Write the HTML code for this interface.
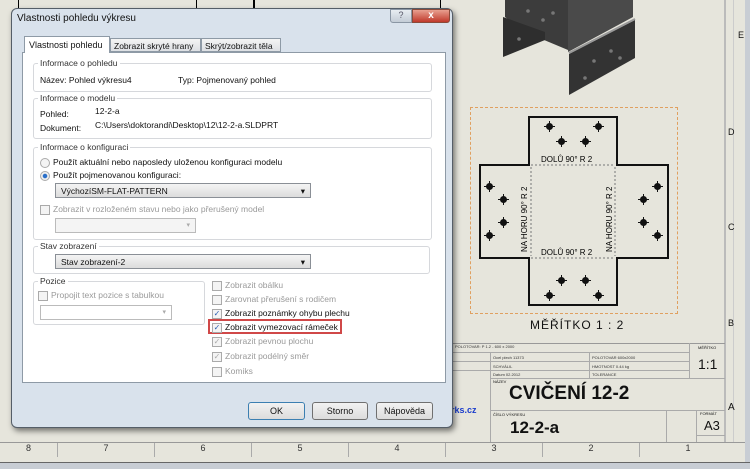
<!DOCTYPE html>
<html><head><meta charset="utf-8"><style>
*{margin:0;padding:0;box-sizing:border-box}
body{width:750px;height:469px;overflow:hidden;background:#e6e5dc;font-family:"Liberation Sans",sans-serif;position:relative;font-size:8.5px;color:#111}
.a{position:absolute}
.dlg{left:11px;top:8px;width:442px;height:420px;background:#d9e2ec;border:1px solid #555e68;border-radius:6px;box-shadow:2px 3px 6px rgba(0,0,0,.5)}
.panel{left:22px;top:52px;width:424px;height:331px;background:#fff;border:1px solid #8e9aa6}
.grp{border:1px solid #d6d8dc;border-radius:3px}
.lab{background:#fff;padding:0 2px;color:#333}
.combo{border:1px solid #8a8f96;background:linear-gradient(#f4f4f4,#dcdcdc);height:15px;padding:2px 5px;font-size:8.5px}
.dis{color:#9a9a9a}
.cb{width:10px;height:10px;border:1px solid #aaa;background:#f4f4f4;display:inline-block;vertical-align:middle;margin-right:3px;font-size:8px;line-height:8px;text-align:center;color:#2a5db0}
.btn{border:1px solid #707070;border-radius:3px;background:linear-gradient(#f2f2f2,#dcdcdc);text-align:center;font-size:9px;line-height:16px;height:18px}
.ru{top:443px;height:14px;font-size:9px;color:#333;border-left:1px solid #aaa;text-align:center}
.hole{position:absolute;width:7px;height:7px;border-radius:50%;background:#111}
.hole:before{content:"";position:absolute;left:-2px;top:3px;width:11px;height:1px;background:#111}
.hole:after{content:"";position:absolute;left:3px;top:-2px;width:1px;height:11px;background:#111}
</style></head><body>
<div class="a" style="left:724px;top:0;width:2px;height:443px;background:#bbb"></div>
<div class="a" style="left:733px;top:0;width:1px;height:443px;background:#ccc"></div>
<div class="a" style="left:745px;top:0;width:5px;height:469px;background:#c8cdd4"></div>
<div class="a" style="left:738px;top:30px;font-size:9px">E</div>
<div class="a" style="left:728px;top:127px;font-size:9px">D</div>
<div class="a" style="left:728px;top:222px;font-size:9px">C</div>
<div class="a" style="left:728px;top:318px;font-size:9px">B</div>
<div class="a" style="left:728px;top:402px;font-size:10px">A</div>
<div class="a" style="left:18px;top:0;width:1px;height:8px;background:#000"></div>
<div class="a" style="left:196px;top:0;width:1px;height:8px;background:#000"></div>
<div class="a" style="left:253px;top:0;width:2px;height:8px;background:#000"></div>
<div class="a" style="left:440px;top:0;width:1px;height:8px;background:#000"></div>

<svg class="a" style="left:0;top:0" width="750" height="100">
<polygon points="505,0 568,0 568,50 525,32 505,17" fill="#3c3c3c"/>
<polygon points="503,17 545,32 545,40 503,57" fill="#2e2e2e"/>
<polygon points="568,0 633,0 633,17 568,52" fill="#4a4a4a"/>
<polygon points="569,54 635,20 635,58 569,95" fill="#333"/>
<line x1="569" y1="53" x2="635" y2="19" stroke="#999" stroke-width="2"/>
<circle cx="528" cy="11" r="1.8" fill="#777"/><circle cx="553" cy="13" r="1.8" fill="#777"/><circle cx="543" cy="20" r="1.8" fill="#777"/><circle cx="519" cy="39" r="1.8" fill="#777"/>
<circle cx="594" cy="61" r="1.8" fill="#777"/><circle cx="611" cy="51" r="1.8" fill="#777"/><circle cx="620" cy="58" r="1.8" fill="#777"/><circle cx="585" cy="78" r="1.8" fill="#777"/>
</svg>

<div class="a" style="left:470px;top:107px;width:208px;height:207px;border:1px dashed #e0a060"></div>
<svg class="a" style="left:475px;top:112px" width="200" height="200">
<path d="M54,5 H142 V53 H193 V146 H142 V193 H54 V146 H5 V53 H54 Z" fill="none" stroke="#111" stroke-width="2"/>
<path d="M56,53 H140 M56,146 H140 M56,55 V144 M140,55 V144" stroke="#777" stroke-dasharray="2,2" fill="none" stroke-width="1"/>
<text x="66" y="50" font-size="8" font-family="Liberation Sans">DOLŮ 90°  R 2</text>
<text x="66" y="143" font-size="8" font-family="Liberation Sans">DOLŮ 90°  R 2</text>
<text transform="translate(52,140) rotate(-90)" font-size="8" font-family="Liberation Sans">NA HORU 90°  R 2</text>
<text transform="translate(137,140) rotate(-90)" font-size="8" font-family="Liberation Sans">NA HORU 90°  R 2</text>
</svg>
<div class="hole" style="left:546px;top:123px"></div><div class="hole" style="left:595px;top:123px"></div>
<div class="hole" style="left:558px;top:138px"></div><div class="hole" style="left:582px;top:138px"></div>
<div class="hole" style="left:558px;top:277px"></div><div class="hole" style="left:582px;top:277px"></div>
<div class="hole" style="left:546px;top:292px"></div><div class="hole" style="left:595px;top:292px"></div>
<div class="hole" style="left:486px;top:183px"></div><div class="hole" style="left:500px;top:196px"></div>
<div class="hole" style="left:500px;top:219px"></div><div class="hole" style="left:486px;top:232px"></div>
<div class="hole" style="left:654px;top:183px"></div><div class="hole" style="left:640px;top:196px"></div>
<div class="hole" style="left:640px;top:219px"></div><div class="hole" style="left:654px;top:232px"></div>
<div class="a" style="left:530px;top:318px;font-size:12px;letter-spacing:1px">MĚŘÍTKO 1 : 2</div>

<div class="a" style="left:450px;top:343px;width:275px;height:100px;border-top:1px solid #999"></div>
<div class="a" style="left:455px;top:344px;font-size:4px;color:#333">POLOTOVAR: P 1.2 - 600 x 2000</div>
<div class="a" style="left:450px;top:352px;width:240px;height:1px;background:#aaa"></div>
<div class="a" style="left:450px;top:361px;width:240px;height:1px;background:#aaa"></div>
<div class="a" style="left:450px;top:370px;width:240px;height:1px;background:#aaa"></div>
<div class="a" style="left:490px;top:378px;width:235px;height:1px;background:#aaa"></div>
<div class="a" style="left:490px;top:410px;width:235px;height:1px;background:#aaa"></div>
<div class="a" style="left:689px;top:343px;width:1px;height:35px;background:#aaa"></div>
<div class="a" style="left:589px;top:352px;width:1px;height:26px;background:#aaa"></div>
<div class="a" style="left:490px;top:352px;width:1px;height:91px;background:#aaa"></div>
<div class="a" style="left:666px;top:410px;width:1px;height:33px;background:#aaa"></div>
<div class="a" style="left:696px;top:410px;width:1px;height:33px;background:#aaa"></div>
<div class="a" style="left:493px;top:354px;font-size:4px;line-height:8.5px;color:#333">Ocel plech 11373<br>SCHVÁLIL<br>Datum 02.2012</div>
<div class="a" style="left:592px;top:354px;font-size:4px;line-height:8.5px;color:#333">POLOTOVAR 600x2000<br>HMOTNOST 0.44 kg<br>TOLERANCE</div>
<div class="a" style="left:698px;top:345px;font-size:4px">MĚŘÍTKO</div>
<div class="a" style="left:698px;top:356px;font-size:14px">1:1</div>
<div class="a" style="left:493px;top:379px;font-size:4px">NÁZEV</div>
<div class="a" style="left:509px;top:383px;font-size:19px;font-weight:bold">CVIČENÍ 12-2</div>
<div class="a" style="left:493px;top:412px;font-size:4px">ČÍSLO VÝKRESU</div>
<div class="a" style="left:510px;top:418px;font-size:17px;font-weight:bold">12-2-a</div>
<div class="a" style="left:700px;top:411px;font-size:4px">FORMÁT</div>
<div class="a" style="left:704px;top:418px;font-size:13px">A3</div>
<div class="a" style="left:696px;top:435px;width:29px;height:1px;background:#aaa"></div>
<div class="a" style="left:451px;top:405px;font-size:9px;font-weight:bold;color:#1a3ccc">rks.cz</div>

<div class="a" style="left:0;top:442px;width:745px;height:1px;background:#999"></div>
<div class="a ru" style="left:0;width:57px;border:0">8</div>
<div class="a ru" style="left:57px;width:97px">7</div>
<div class="a ru" style="left:154px;width:97px">6</div>
<div class="a ru" style="left:251px;width:97px">5</div>
<div class="a ru" style="left:348px;width:97px">4</div>
<div class="a ru" style="left:445px;width:97px">3</div>
<div class="a ru" style="left:542px;width:97px">2</div>
<div class="a ru" style="left:639px;width:97px">1</div>
<div class="a" style="left:0;top:462px;width:750px;height:7px;background:#c8cdd4;border-top:1px solid #666"></div>

<div class="a dlg"></div>
<div class="a" style="left:17px;top:13px;font-size:10px;color:#111">Vlastnosti pohledu výkresu</div>
<div class="a" style="left:390px;top:9px;width:22px;height:14px;border:1px solid #8a96a4;border-radius:0 0 0 3px;background:linear-gradient(#e8edf2,#c3ccd6);text-align:center;font-size:9px;color:#556">?</div>
<div class="a" style="left:412px;top:9px;width:38px;height:14px;border:1px solid #8a4a3a;border-radius:0 0 3px 0;background:linear-gradient(#e8a090,#c0392b);text-align:center;font-size:10px;color:#fff;font-weight:bold">x</div>
<div class="a panel"></div>
<div class="a" style="left:24px;top:36px;width:86px;height:17px;background:#fff;border:1px solid #8e9aa6;border-bottom:0;font-size:9px;padding:3px 4px">Vlastnosti pohledu</div>
<div class="a" style="left:110px;top:38px;width:91px;height:14px;background:linear-gradient(#f4f4f4,#dde0e4);border:1px solid #8e9aa6;font-size:8.5px;padding:2px 3px">Zobrazit skryté hrany</div>
<div class="a" style="left:201px;top:38px;width:80px;height:14px;background:linear-gradient(#f4f4f4,#dde0e4);border:1px solid #8e9aa6;font-size:8.5px;padding:2px 3px">Skrýt/zobrazit těla</div>

<div class="a grp" style="left:33px;top:63px;width:399px;height:29px"></div>
<div class="a lab" style="left:38px;top:58px">Informace o pohledu</div>
<div class="a" style="left:40px;top:75px">Název: Pohled výkresu4</div>
<div class="a" style="left:178px;top:75px">Typ: Pojmenovaný pohled</div>

<div class="a grp" style="left:33px;top:98px;width:399px;height:41px"></div>
<div class="a lab" style="left:38px;top:93px">Informace o modelu</div>
<div class="a" style="left:40px;top:109px">Pohled:</div><div class="a" style="left:95px;top:106px">12-2-a</div>
<div class="a" style="left:40px;top:123px">Dokument:</div><div class="a" style="left:95px;top:120px">C:\Users\doktorandi\Desktop\12\12-2-a.SLDPRT</div>

<div class="a grp" style="left:33px;top:147px;width:399px;height:93px"></div>
<div class="a lab" style="left:38px;top:142px">Informace o konfiguraci</div>
<div class="a" style="left:40px;top:157px"><span class="cb" style="border-radius:50%"></span>Použít aktuální nebo naposledy uloženou konfiguraci modelu</div>
<div class="a" style="left:40px;top:170px"><span class="cb" style="border-radius:50%;background:radial-gradient(#2a6fc9 35%,#eee 45%)"></span>Použít pojmenovanou konfiguraci:</div>
<div class="a combo" style="left:55px;top:183px;width:256px">VýchozíSM-FLAT-PATTERN<span style="float:right">▾</span></div>
<div class="a dis" style="left:40px;top:204px"><span class="cb"></span>Zobrazit v rozloženém stavu nebo jako přerušený model</div>
<div class="a combo" style="left:55px;top:218px;width:141px;background:#f4f4f4;border-color:#bbb;color:#aaa"><span style="float:right;font-size:7px">▾</span></div>

<div class="a grp" style="left:33px;top:246px;width:397px;height:28px"></div>
<div class="a lab" style="left:38px;top:241px">Stav zobrazení</div>
<div class="a combo" style="left:55px;top:254px;width:256px">Stav zobrazení-2<span style="float:right">▾</span></div>

<div class="a grp" style="left:33px;top:281px;width:172px;height:44px"></div>
<div class="a lab" style="left:38px;top:276px">Pozice</div>
<div class="a dis" style="left:38px;top:290px"><span class="cb"></span>Propojit text pozice s tabulkou</div>
<div class="a combo" style="left:40px;top:305px;width:132px;background:#fff;border-color:#bbb;color:#aaa"><span style="float:right;font-size:7px">▾</span></div>

<div class="a dis" style="left:212px;top:280px"><span class="cb"></span>Zobrazit obálku</div>
<div class="a dis" style="left:212px;top:294px"><span class="cb"></span>Zarovnat přerušení s rodičem</div>
<div class="a" style="left:212px;top:308px"><span class="cb">✓</span>Zobrazit poznámky ohybu plechu</div>
<div class="a" style="left:208px;top:319px;width:134px;height:15px;border:2px solid #d04848"></div>
<div class="a" style="left:212px;top:322px"><span class="cb">✓</span>Zobrazit vymezovací rámeček</div>
<div class="a dis" style="left:212px;top:336px"><span class="cb" style="color:#aaa">✓</span>Zobrazit pevnou plochu</div>
<div class="a dis" style="left:212px;top:351px"><span class="cb" style="color:#aaa">✓</span>Zobrazit podélný směr</div>
<div class="a dis" style="left:212px;top:366px"><span class="cb"></span>Komiks</div>

<div class="a btn" style="left:248px;top:402px;width:57px;border-color:#3c7fb1">OK</div>
<div class="a btn" style="left:312px;top:402px;width:56px">Storno</div>
<div class="a btn" style="left:376px;top:402px;width:57px">Nápověda</div>
</body></html>
